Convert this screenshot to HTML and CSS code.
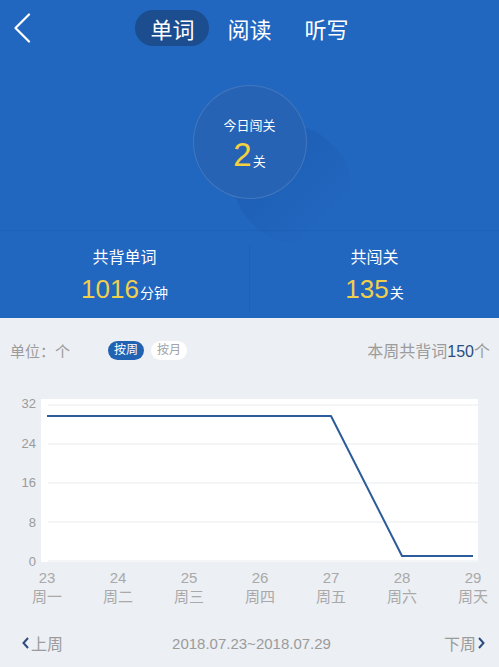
FILE: index.html
```html
<!DOCTYPE html>
<html lang="zh-CN">
<head>
    <meta charset="UTF-8">
    <meta name="viewport" content="width=device-width, initial-scale=1.0">
    <title>学习统计</title>
    <link rel="stylesheet" href="styles.css">
</head>
<body>

    <!-- Top blue header -->
    <div class="header">
        <div class="nav">
            <svg class="back" width="18" height="30" viewBox="0 0 18 30">
                <polyline points="16,1.5 2.5,15 16,28.5" fill="none" stroke="#fff" stroke-width="2.2" stroke-linecap="round" stroke-linejoin="round"/>
            </svg>
            <div class="tabs">
                <span class="tab active">单词</span>
                <span class="tab">阅读</span>
                <span class="tab">听写</span>
            </div>
        </div>

        <div class="today">
            <div class="circle">
                <p class="circle-label">今日闯关</p>
                <p class="circle-num">2<small>关</small></p>
            </div>
        </div>

        <div class="stats">
            <div class="stat">
                <p class="stat-label">共背单词</p>
                <p class="stat-num">1016<small>分钟</small></p>
            </div>
            <div class="stat">
                <p class="stat-label">共闯关</p>
                <p class="stat-num">135<small>关</small></p>
            </div>
        </div>
    </div>

    <!-- Chart section -->
    <div class="content">
        <div class="filter">
            <span class="unit">单位：个</span>
            <span class="pill active">按周</span>
            <span class="pill">按月</span>
            <span class="total">本周共背词<b>150</b>个</span>
        </div>

        <div class="chart">
            <div class="y-axis">
                <span>32</span><span>24</span><span>16</span><span>8</span><span>0</span>
            </div>
            <div class="plot">
                <svg width="437" height="163" viewBox="0 0 437 163">
                    <g stroke="#f1f2f4" stroke-width="1.5">
                        <line x1="7" y1="6" x2="437" y2="6"/>
                        <line x1="7" y1="45" x2="437" y2="45"/>
                        <line x1="7" y1="84" x2="437" y2="84"/>
                        <line x1="7" y1="123" x2="437" y2="123"/>
                        <line x1="7" y1="162" x2="437" y2="162"/>
                    </g>
                    <polyline points="6,17 77,17 148,17 219,17 290,17 361,157 432,157" fill="none" stroke="#2c5b9b" stroke-width="2" stroke-linejoin="round"/>
                </svg>
            </div>
        </div>

        <div class="x-axis">
            <div class="day"><span>23</span><span>周一</span></div>
            <div class="day"><span>24</span><span>周二</span></div>
            <div class="day"><span>25</span><span>周三</span></div>
            <div class="day"><span>26</span><span>周四</span></div>
            <div class="day"><span>27</span><span>周五</span></div>
            <div class="day"><span>28</span><span>周六</span></div>
            <div class="day"><span>29</span><span>周天</span></div>
        </div>

        <div class="pager">
            <span class="prev">
                <svg width="7" height="12" viewBox="0 0 7 12"><polyline points="6,1 1.5,6 6,11" fill="none" stroke="#2b4c7e" stroke-width="2"/></svg>上周
            </span>
            <span class="range">2018.07.23~2018.07.29</span>
            <span class="next">下周
                <svg width="7" height="12" viewBox="0 0 7 12"><polyline points="1,1 5.5,6 1,11" fill="none" stroke="#2b4c7e" stroke-width="2"/></svg>
            </span>
        </div>
    </div>

</body>
</html>
```

FILE: styles.css
```css
body {
    margin: 0;
    width: 499px;
    height: 667px;
    overflow: hidden;
    background: #eceff3;
    font-family: "Liberation Sans", "Noto Sans CJK SC", sans-serif;
}
p {
    margin: 0;
}

/* header */
.header {
    background: #2166bf;
    height: 318px;
    overflow: hidden;
    color: #fff;
}
.nav {
    position: relative;
    height: 56px;
    padding-top: 10px;
    box-sizing: border-box;
}
.back {
    position: absolute;
    left: 13px;
    top: 13px;
}
.tabs {
    display: flex;
    justify-content: center;
    gap: 3px;
}
.tab {
    padding: 0 15px;
    height: 36px;
    line-height: 36px;
    font-size: 22px;
    border-radius: 18px;
    font-family: "Noto Sans CJK SC", sans-serif;
}
.tab.active {
    background: #1b4d8f;
}

.today {
    position: relative;
    z-index: 0;
    display: flex;
    justify-content: center;
    margin-top: 29px;
}
.circle {
    position: relative;
    width: 114px;
    height: 114px;
    box-sizing: border-box;
    border-radius: 50%;
    border: 1px solid rgba(255, 255, 255, 0.13);
    background: #2763b5;
    text-align: center;
}
/* long shadow to the bottom right */
.circle::before {
    content: "";
    position: absolute;
    left: 0;
    top: 56px;
    width: 112px;
    height: 120px;
    border-radius: 56px;
    transform-origin: 56px 0;
    transform: rotate(-45deg);
    background: linear-gradient(rgba(10, 50, 120, 0.16), rgba(10, 50, 120, 0) 90%);
    z-index: -1;
}
.circle-label {
    padding-top: 30px;
    font-size: 13px;
    line-height: 18px;
    font-family: "Noto Sans CJK SC", sans-serif;
}
.circle-num {
    margin-top: 3px;
    font-size: 33px;
    line-height: 36px;
    color: #f5d13f;
}
.circle-num small {
    font-size: 13px;
    color: #fff;
    margin-left: 1px;
}

.stats {
    display: flex;
    margin-top: 31px;
    border-top: 1px solid rgba(0, 40, 110, 0.07);
    padding: 14px 0 6px;
    text-align: center;
}
.stat {
    flex: 1;
    height: 67px;
}
.stat + .stat {
    border-left: 1px solid rgba(0, 40, 110, 0.08);
}
.stat-label {
    padding-top: 2px;
    font-size: 16px;
    line-height: 18px;
    font-family: "Noto Sans CJK SC", sans-serif;
}
.stat-num {
    margin-top: 9px;
    font-size: 26px;
    line-height: 30px;
    color: #efcf4c;
}
.stat-num small {
    font-size: 14px;
    color: #fff;
    margin-left: 1px;
}

/* chart section */
.content {
    color: #9b9b9b;
}
.filter {
    display: flex;
    align-items: center;
    height: 20px;
    margin-top: 22px;
    padding: 0 9px 0 10px;
}
.unit {
    font-size: 15px;
    width: 98px;
}
.pill {
    font-size: 12px;
    height: 19px;
    line-height: 19px;
    padding: 0 6px;
    border-radius: 10px;
    background: #fff;
    color: #a3a3a3;
    margin-right: 7px;
}
.pill.active {
    background: #2162b3;
    color: #fff;
}
.total {
    margin-left: auto;
    font-size: 16px;
}
.total b {
    font-weight: normal;
    color: #2b4c7e;
}

.chart {
    display: flex;
    align-items: flex-start;
    height: 163px;
    margin-top: 39px;
}
.y-axis {
    width: 36px;
    height: 172px;
    margin-top: -2px;
    margin-right: 5px;
    display: flex;
    flex-direction: column;
    justify-content: space-between;
    align-items: flex-end;
    font-size: 13px;
    line-height: 14px;
}
.plot {
    background: #fff;
    width: 437px;
    height: 163px;
}
.plot svg {
    display: block;
}

.x-axis {
    display: grid;
    grid-template-columns: repeat(7, 71px);
    margin: 6px 0 0 11.5px;
    color: #a9a9a9;
}
.day {
    display: flex;
    flex-direction: column;
    align-items: center;
    font-size: 15px;
    line-height: 19px;
}

.pager {
    display: flex;
    align-items: center;
    justify-content: space-between;
    margin-top: 26px;
    padding: 0 14px 0 22px;
    height: 22px;
    font-size: 16px;
}
.prev, .next {
    display: flex;
    align-items: center;
    gap: 2px;
}
.range {
    font-size: 15px;
    margin-right: 4px;
}
```
